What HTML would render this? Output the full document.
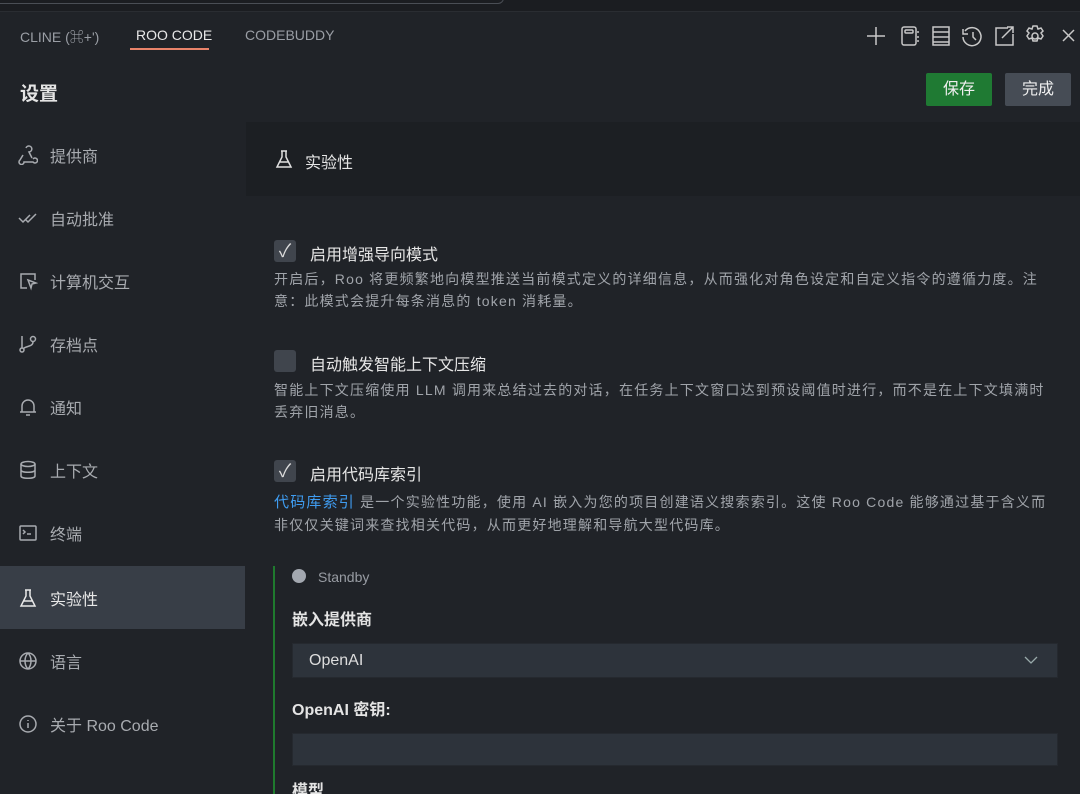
<!DOCTYPE html>
<html><head><meta charset="utf-8"><style>
*{box-sizing:border-box;margin:0;padding:0}
html{width:1080px;height:794px;overflow:hidden}
body{width:1080px;height:794px;overflow:hidden;background:#202328;font-family:"Liberation Sans","Noto Sans CJK SC",sans-serif;color:#ccc;position:relative}
.abs{position:absolute}
.top{left:0;top:0;width:1080px;height:12px;background:#1b1d21;border-bottom:1px solid #2a2d32}
.top .inp{position:absolute;left:-10px;top:-10px;width:514px;height:14px;border:1px solid #4a4e55;border-radius:6px}
.tab{top:27px;font-size:14px;color:#9a9ea5}
.side{left:0;top:122px;width:246px;height:672px;background:#202328}
.item{position:absolute;left:0;width:245px;height:63px;display:flex;align-items:center;padding-left:18px;font-size:16px;color:#a8abb0}
.item svg{width:20px;height:20px;margin-right:12px;fill:none;stroke:#a8abb0;stroke-width:1.5}
.item.act{background:#383e47;color:#e8e8e8}
.item.act svg{stroke:#e8e8e8}
.cb{left:274px;width:22px;height:22px;background:#40454d;border-radius:3px;color:#ddd;font-size:18px;text-align:center;line-height:22px}
.lbl{left:310px;font-size:16px;color:#e6e6e6}
.desc{left:274px;width:784px;font-size:14px;letter-spacing:1.2px;line-height:22px;color:#a0a4aa}
.btn{top:73px;height:33px;width:66px;font-size:16px;color:#eee;text-align:center;line-height:33px;border-radius:2px}
</style></head><body>
<div class="abs top"><div class="inp"></div></div>
<div class="abs tab" style="left:20px">CLINE (⌘+')</div>
<div class="abs tab" style="left:136px;color:#e8e8e8">ROO CODE</div>
<div class="abs" style="left:130px;top:48px;width:79px;height:2px;background:#e9836a"></div>
<div class="abs tab" style="left:245px">CODEBUDDY</div>
<svg class="abs" style="left:864px;top:24px" width="216" height="24" fill="none" stroke="#c8c8c8" stroke-width="1.5">
<path d="M12 3v18M3 12h18"/>
<rect x="38" y="3" width="14" height="18" rx="2"/><rect x="41" y="6" width="8" height="3" rx="1"/><path d="M54 7v2M54 12v2M54 16v2"/>
<rect x="69" y="3" width="16" height="18"/><path d="M69 8h16M69 13h16M69 18h16"/>
<path d="M101 7a9 9 0 1 1-2 6M99 5v5h5M109 8v5l3 3"/>
<path d="M144 4h-12v17h17v-11M138 14l11-11M143 3h6v6"/>
<circle cx="171" cy="12" r="3"/><path d="M169 2h4l1 3 3-1 2 3-2 2 2 3-2 3-3-1-1 3h-4l-1-3-3 1-2-3 2-3-2-2 2-3 3 1z"/>
<path d="M199 6l11 11M210 6l-11 11"/>
</svg>
<div class="abs" style="left:20px;top:79px;font-size:19px;font-weight:bold;color:#e4e4e4">设置</div>
<div class="abs btn" style="left:926px;background:#1f7a33">保存</div>
<div class="abs btn" style="left:1005px;background:#464c55">完成</div>

<div class="abs side">
<div class="item" style="top:1px"><svg viewBox="0 0 20 20"><path d="M8 3a3 3 0 1 1 3 4l3 6M5 10l-3 5a2.5 2.5 0 1 0 4 2h9a2.5 2.5 0 1 0 0-3"/></svg>提供商</div>
<div class="item" style="top:64px"><svg viewBox="0 0 20 20"><path d="M1 10l4 4 7-7M8 12l2 2 8-8"/></svg>自动批准</div>
<div class="item" style="top:127px"><svg viewBox="0 0 20 20"><path d="M9 17H3V3h14v6"/><path d="M10 9l8 3-4 1-1 4z"/></svg>计算机交互</div>
<div class="item" style="top:190px"><svg viewBox="0 0 20 20"><circle cx="4" cy="16" r="2"/><circle cx="15" cy="5" r="2.5"/><path d="M4 2v12M15 8c0 5-8 4-10 7"/></svg>存档点</div>
<div class="item" style="top:253px"><svg viewBox="0 0 20 20"><path d="M4 15V9a6 6 0 0 1 12 0v6zM2 15h16M8 18h4"/></svg>通知</div>
<div class="item" style="top:316px"><svg viewBox="0 0 20 20"><ellipse cx="10" cy="4" rx="7" ry="2.5"/><path d="M3 4v12c0 3 14 3 14 0V4M3 10c0 3 14 3 14 0"/></svg>上下文</div>
<div class="item" style="top:379px"><svg viewBox="0 0 20 20"><rect x="2" y="3" width="16" height="14" rx="1"/><path d="M5 7l2 2-2 2M9 11h4"/></svg>终端</div>
<div class="item act" style="top:444px"><svg viewBox="0 0 20 20"><path d="M7 2h6M8 2v6l-5 10h14l-5-10V2M5 13h10"/></svg>实验性</div>
<div class="item" style="top:507px"><svg viewBox="0 0 20 20"><circle cx="10" cy="10" r="8"/><path d="M2 10h16M10 2c-4 4-4 12 0 16M10 2c4 4 4 12 0 16"/></svg>语言</div>
<div class="item" style="top:570px"><svg viewBox="0 0 20 20"><circle cx="10" cy="10" r="8"/><path d="M10 9v5M10 6v1"/></svg>关于 Roo Code</div>
</div>

<div class="abs" style="left:246px;top:122px;width:834px;height:74px;background:#1c1f23"></div>
<svg class="abs" style="left:274px;top:149px" width="20" height="20" fill="none" stroke="#e0e0e0" stroke-width="1.5"><path d="M7 2h6M8 2v6l-5 10h14l-5-10V2M5 13h10"/></svg>
<div class="abs" style="left:305px;top:149px;font-size:16px;color:#e6e6e6">实验性</div>

<div class="abs cb" style="top:240px">✓</div>
<div class="abs lbl" style="top:241px">启用增强导向模式</div>
<div class="abs desc" style="top:268px">开启后，Roo 将更频繁地向模型推送当前模式定义的详细信息，从而强化对角色设定和自定义指令的遵循力度。注意：此模式会提升每条消息的 token 消耗量。</div>

<div class="abs cb" style="top:350px"></div>
<div class="abs lbl" style="top:351px">自动触发智能上下文压缩</div>
<div class="abs desc" style="top:379px">智能上下文压缩使用 LLM 调用来总结过去的对话，在任务上下文窗口达到预设阈值时进行，而不是在上下文填满时丢弃旧消息。</div>

<div class="abs cb" style="top:460px">✓</div>
<div class="abs lbl" style="top:461px">启用代码库索引</div>
<div class="abs desc" style="top:491px"><span style="color:#3f9cf0;font-size:15px">代码库索引</span> 是一个实验性功能，使用 AI 嵌入为您的项目创建语义搜索索引。这使 Roo Code 能够通过基于含义而非仅仅关键词来查找相关代码，从而更好地理解和导航大型代码库。</div>

<div class="abs" style="left:273px;top:566px;width:2px;height:228px;background:#1f7a2e"></div>
<div class="abs" style="left:292px;top:569px;width:14px;height:14px;border-radius:50%;background:#a3a8b0"></div>
<div class="abs" style="left:318px;top:569px;font-size:14px;color:#989ca3">Standby</div>
<div class="abs" style="left:292px;top:606px;font-size:16px;font-weight:bold;color:#e4e4e4">嵌入提供商</div>
<div class="abs" style="left:292px;top:643px;width:766px;height:35px;background:#2d333b;border:1px solid #25292f;font-size:16px;color:#ddd;line-height:33px;padding-left:16px">OpenAI</div>
<svg class="abs" style="left:1024px;top:655px" width="14" height="10" fill="none" stroke="#9aa" stroke-width="1.3"><path d="M1 2l6 6 6-6"/></svg>
<div class="abs" style="left:292px;top:696px;font-size:16px;font-weight:bold;color:#e4e4e4">OpenAI 密钥:</div>
<div class="abs" style="left:292px;top:733px;width:766px;height:33px;background:#2d333b;border:1px solid #25292f"></div>
<div class="abs" style="left:292px;top:782px;font-size:16px;font-weight:bold;color:#e4e4e4;height:12px;overflow:hidden;line-height:20px">模型</div>
</body></html>
